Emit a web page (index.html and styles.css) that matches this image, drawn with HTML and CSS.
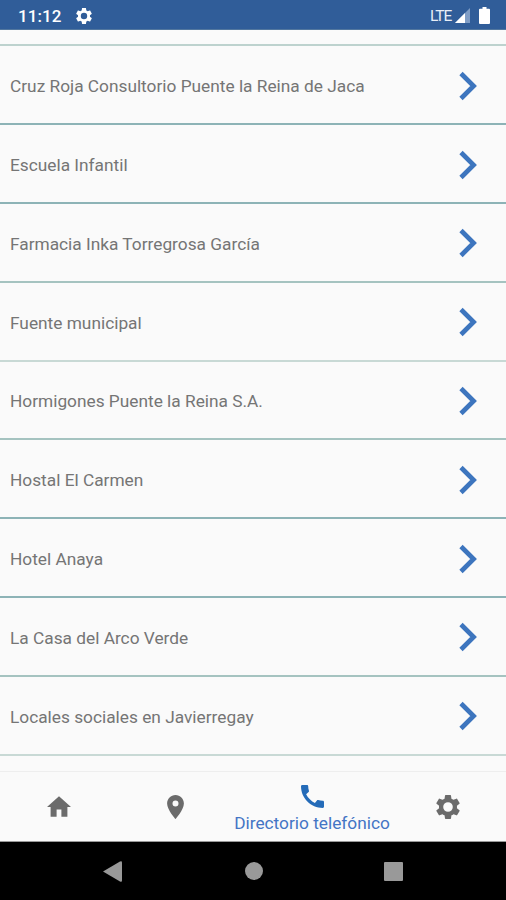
FILE: index.html
```html
<!DOCTYPE html>
<html lang="es">
<head>
<meta charset="utf-8">
<meta name="viewport" content="width=device-width, initial-scale=1">
<title>Directorio telefónico</title>
<link rel="stylesheet" href="styles.css">
</head>
<body>
<svg class="defs" width="0" height="0">
  <symbol id="chevron" viewBox="0 0 20 30"><path d="M3 2.500 15.600 15 3 27.500" fill="none" stroke="currentColor" stroke-width="4.700"/></symbol>
  <symbol id="gear" viewBox="2 2 20 20"><path fill="currentColor" d="M19.43 12.98c.04-.32.07-.64.07-.98s-.03-.66-.07-.98l2.11-1.65c.19-.15.24-.42.12-.64l-2-3.46c-.12-.22-.39-.3-.61-.22l-2.49 1c-.52-.4-1.08-.73-1.69-.98l-.38-2.65C14.46 2.18 14.25 2 14 2h-4c-.25 0-.46.18-.49.42l-.38 2.65c-.61.25-1.17.59-1.69.98l-2.49-1c-.23-.09-.49 0-.61.22l-2 3.46c-.13.22-.07.49.12.64l2.11 1.65c-.04.32-.07.65-.07.98s.03.66.07.98l-2.11 1.65c-.19.15-.24.42-.12.64l2 3.46c.12.22.39.3.61.22l2.49-1c.52.4 1.08.73 1.69.98l.38 2.65c.03.24.24.42.49.42h4c.25 0 .46-.18.49-.42l.38-2.65c.61-.25 1.17-.59 1.69-.98l2.49 1c.23.09.49 0 .61-.22l2-3.46c.12-.22.07-.49-.12-.64l-2.11-1.65zM12 16a4 4 0 1 1 0-8 4 4 0 0 1 0 8z"/></symbol>
</svg>
<div class="screen">
  <header class="status">
    <span class="clock">11:12</span>
    <svg class="status-gear"><use href="#gear"/></svg>
    <span class="network">LTE</span>
    <svg class="signal" viewBox="0 0 15 15"><path d="M15 0v15H0z" fill="#7f9dc6"/><path d="M10 5v10H0z" fill="#fff"/></svg>
    <svg class="battery" viewBox="0 0 11 17"><path d="M3.500 0h4v1.700H10q1 0 1 1V16q0 1-1 1H1q-1 0-1-1V2.700q0-1 1-1h2.500z" fill="#fff"/></svg>
  </header>
  <main class="list">
    <div class="row"><span>Cruz Roja Consultorio Puente la Reina de Jaca</span><svg class="chevron"><use href="#chevron"/></svg></div>
    <div class="row"><span>Escuela Infantil</span><svg class="chevron"><use href="#chevron"/></svg></div>
    <div class="row soft"><span>Farmacia Inka Torregrosa García</span><svg class="chevron"><use href="#chevron"/></svg></div>
    <div class="row pale"><span>Fuente municipal</span><svg class="chevron"><use href="#chevron"/></svg></div>
    <div class="row soft"><span>Hormigones Puente la Reina S.A.</span><svg class="chevron"><use href="#chevron"/></svg></div>
    <div class="row"><span>Hostal El Carmen</span><svg class="chevron"><use href="#chevron"/></svg></div>
    <div class="row"><span>Hotel Anaya</span><svg class="chevron"><use href="#chevron"/></svg></div>
    <div class="row soft"><span>La Casa del Arco Verde</span><svg class="chevron"><use href="#chevron"/></svg></div>
    <div class="row pale"><span>Locales sociales en Javierregay</span><svg class="chevron"><use href="#chevron"/></svg></div>
  </main>
  <nav class="tabs">
    <div class="tab"><svg class="home" viewBox="2 3 20 17"><path fill="currentColor" d="M10 20v-6h4v6h5v-8h3L12 3 2 12h3v8z"/></svg></div>
    <div class="tab"><svg class="pin" viewBox="5 2 14 20"><path fill="currentColor" d="M12 2C8.130 2 5 5.130 5 9c0 5.250 7 13 7 13s7-7.750 7-13c0-3.870-3.130-7-7-7zm0 9.500a2.500 2.500 0 1 1 0-5 2.500 2.500 0 0 1 0 5z"/></svg></div>
    <div class="tab active"><svg class="phone" viewBox="3 3 18 18"><path fill="currentColor" d="M20.010 15.380c-1.230 0-2.420-.2-3.530-.56-.35-.12-.74-.03-1.010.24l-1.570 1.970c-2.830-1.350-5.480-3.900-6.890-6.830l1.950-1.660c.27-.28.35-.67.24-1.020-.37-1.110-.56-2.300-.56-3.530 0-.54-.45-.99-.99-.99H4.190C3.650 3 3 3.240 3 3.990 3 13.280 10.730 21 20.010 21c.71 0 .99-.63.99-1.180v-3.450c0-.54-.45-.99-.99-.99z"/></svg><span>Directorio telefónico</span></div>
    <div class="tab"><svg class="settings"><use href="#gear"/></svg></div>
  </nav>
  <footer class="system">
    <svg class="back" viewBox="0 0 19 21"><path d="M0 10.500 17 .6q2-1 2 1v17.800q0 2-2 1z" fill="#999"/></svg>
    <span class="circle"></span>
    <span class="square"></span>
  </footer>
</div>
</body>
</html>
```
FILE: styles.css
```css
* { box-sizing: border-box; }
body { margin: 0; font-family: Roboto, "Liberation Sans", sans-serif; background: #fafafa; }
svg { display: block; flex: none; }
.defs { position: absolute; }
.screen { width: 506px; height: 900px; display: flex; flex-direction: column; overflow: hidden; }

.status { height: 30px; flex: none; display: flex; align-items: center; background: #305d99; border-bottom: 1px solid #52779f; color: #fff; padding: 2px 16px 0 18px; }
.clock { width: 58px; font-size: 17px; font-weight: 500; letter-spacing: .1px; }
.status-gear { width: 16px; height: 16px; }
.network { margin-left: auto; width: 25px; font-size: 15.5px; letter-spacing: -1px; color: #e8eef7; }
.signal { width: 15px; height: 15px; }
.battery { width: 11px; height: 17px; margin-left: 9px; }

.list { height: 741px; flex: none; padding-top: 14.4px; }
.list::before { content: ""; display: block; height: 2px; background: #bdd2ce; }
.row { height: 78.8px; display: flex; align-items: center; justify-content: space-between; padding: 3px 28px 0 10px; border-bottom: 2px solid #8db3b6; font-size: 17.3px; color: #757575; white-space: nowrap; }
.row.soft { border-color: #a5c3c0; }
.row.pale { border-color: #c8d9d5; }
.chevron { width: 20px; height: 30px; margin-top: -1px; color: #3d75be; }

.tabs { height: 71px; flex: none; display: grid; grid-template-columns: 117px 117px 156px 116px; border-top: 1px solid #eee; border-bottom: 1px solid #999; color: #6b6b6b; }
.tab { display: flex; flex-direction: column; align-items: center; justify-content: center; }
.home { width: 24px; height: 21px; }
.pin { width: 17px; height: 24px; }
.settings { width: 24px; height: 24px; }
.phone { width: 23px; height: 23px; color: #246bb8; }
.tab.active { color: #4475c5; font-size: 17.3px; white-space: nowrap; padding-top: 5px; }
.active span { line-height: 20px; margin-top: 5px; }

.system { height: 58px; flex: none; background: #000; display: flex; align-items: center; padding-left: 103px; }
.back { width: 19px; height: 21px; }
.circle { width: 18px; height: 18px; border-radius: 50%; background: #999; margin-left: 123px; }
.square { width: 19px; height: 19px; border-radius: 1px; background: #999; margin-left: 121px; }
```
